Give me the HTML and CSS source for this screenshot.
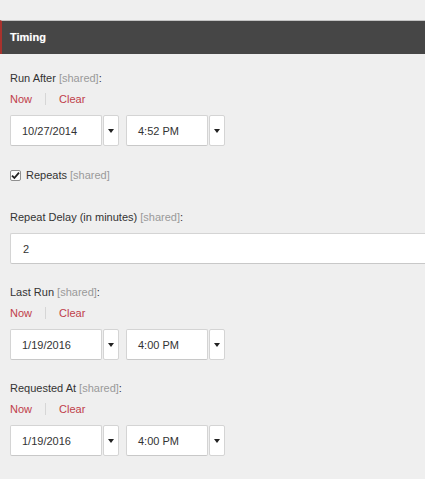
FILE: index.html
```html
<!DOCTYPE html>
<html lang="en">
<head>
    <meta charset="UTF-8">
    <meta name="viewport" content="width=device-width, initial-scale=1.0">
    <title>Timing</title>
    <link rel="stylesheet" href="styles.css">
</head>
<body>
    <div class="panel">
        <div class="panel-head">Timing</div>
        <div class="panel-body">
            <div class="field">
                <div class="label">Run After <span class="shared">[shared]</span>:</div>
                <div class="links"><a href="#">Now</a><span class="sep"></span><a href="#">Clear</a></div>
                <div class="datetime">
                    <div class="combo date"><span class="value">10/27/2014</span><span class="drop"><i class="caret"></i></span></div>
                    <div class="combo time"><span class="value">4:52 PM</span><span class="drop"><i class="caret"></i></span></div>
                </div>
            </div>

            <div class="field check-row">
                <span class="checkbox"><svg width="9" height="9" viewBox="0 0 9 9"><path d="M1 4.6 L3.4 7 L8 1.6" fill="none" stroke="#222" stroke-width="1.8"/></svg></span>
                <span>Repeats <span class="shared">[shared]</span></span>
            </div>

            <div class="field">
                <div class="label wide">Repeat Delay (in minutes) <span class="shared">[shared]</span>:</div>
                <div class="text-input"><span class="value">2</span></div>
            </div>

            <div class="field">
                <div class="label">Last Run <span class="shared">[shared]</span>:</div>
                <div class="links"><a href="#">Now</a><span class="sep"></span><a href="#">Clear</a></div>
                <div class="datetime">
                    <div class="combo date"><span class="value">1/19/2016</span><span class="drop"><i class="caret"></i></span></div>
                    <div class="combo time"><span class="value">4:00 PM</span><span class="drop"><i class="caret"></i></span></div>
                </div>
            </div>

            <div class="field">
                <div class="label">Requested At <span class="shared">[shared]</span>:</div>
                <div class="links"><a href="#">Now</a><span class="sep"></span><a href="#">Clear</a></div>
                <div class="datetime">
                    <div class="combo date"><span class="value">1/19/2016</span><span class="drop"><i class="caret"></i></span></div>
                    <div class="combo time"><span class="value">4:00 PM</span><span class="drop"><i class="caret"></i></span></div>
                </div>
            </div>
        </div>
    </div>
</body>
</html>
```

FILE: styles.css
```css
body {
    margin: 0;
    background: #efefef;
    font-family: "Liberation Sans", Arial, sans-serif;
    font-size: 11px;
    color: #333;
}
.panel { padding-top: 20px; overflow: hidden; }
.panel-head {
    border-top: 1px solid #c4c4c4;
    border-left: 2px solid #a8322d;
    background: #464646;
    color: #fff;
    font-weight: bold;
    height: 33px;
    line-height: 32px;
    padding-left: 8px;
    text-shadow: 0 0 1px rgba(255, 255, 255, 0.4);
}
.panel-body { padding: 17px 0 0 10px; }

.field { margin-bottom: 21px; }
.label { line-height: 14px; margin-bottom: 7px; }
.label.wide { margin-bottom: 9px; }
.shared { color: #9a9a9a; }

.links { display: flex; align-items: center; line-height: 14px; margin-bottom: 9px; }
.links a { color: #c0404a; text-decoration: none; }
.sep {
    width: 1px;
    height: 12px;
    background: #d6d6d6;
    margin: 0 13px 0 13px;
}

.datetime { display: flex; gap: 7px; }
.combo { display: flex; gap: 1px; height: 31px; }
.value {
    display: flex;
    align-items: center;
    background: #fff;
    border: 1px solid #d4d4d4;
    border-bottom-color: #c8c8c8;
    border-radius: 2px;
    padding-left: 11px;
    box-sizing: border-box;
    height: 31px;
}
.date .value { width: 92px; }
.time .value { width: 82px; }
.drop {
    width: 16px;
    height: 31px;
    box-sizing: border-box;
    background: #fff;
    border: 1px solid #d4d4d4;
    border-radius: 2px;
    display: flex;
    align-items: center;
    justify-content: center;
}
.caret {
    width: 0;
    height: 0;
    border-left: 3px solid transparent;
    border-right: 3px solid transparent;
    border-top: 4px solid #222;
}

.check-row {
    display: flex;
    align-items: center;
    gap: 5px;
    line-height: 14px;
    margin-top: 22px;
    margin-bottom: 28px;
}
.checkbox {
    width: 11px;
    height: 11px;
    box-sizing: border-box;
    border: 1px solid #8f8f8f;
    border-radius: 2px;
    background: #fdfdfd;
    display: flex;
    align-items: center;
    justify-content: center;
}

.text-input .value {
    width: 415px;
    padding-left: 12px;
    border-right: none;
    border-radius: 2px 0 0 2px;
}
```
